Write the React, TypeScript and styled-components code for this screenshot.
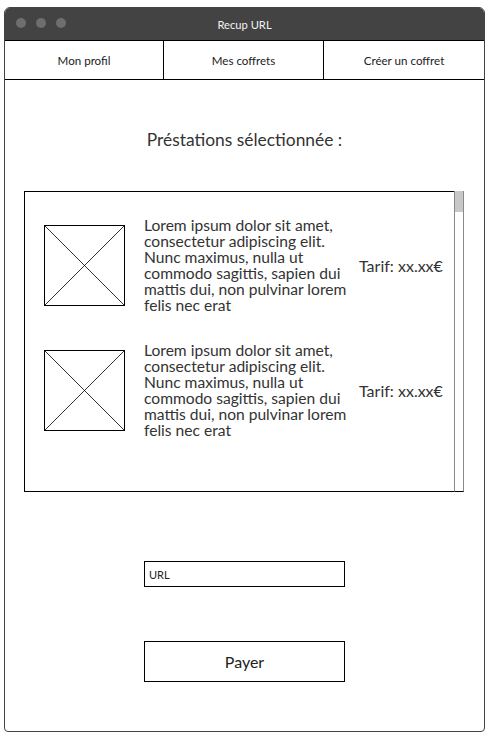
import styled, { createGlobalStyle } from 'styled-components';

const GlobalStyle = createGlobalStyle`
	body {
		margin: 0;
		background: #ffffff;
		font-family: Lato, 'Open Sans', sans-serif;
		color: #333333;
	}
`;

const Window = styled.div`
	box-sizing: border-box;
	margin: 7px 0 0 4px;
	width: 481px;
	height: 725px;
	border: 1px solid #444444;
	border-radius: 6px 6px 4px 4px;
	overflow: hidden;
	display: flex;
	flex-direction: column;
`;

const TitleBar = styled.div`
	position: relative;
	height: 32px;
	background: #434343;
	display: flex;
	align-items: center;
	justify-content: center;
	color: #f2f2f2;
	font-size: 11.2px;
`;

const Dots = styled.div`
	position: absolute;
	left: 11px;
	top: 10px;
	display: flex;
	gap: 10px;
`;

const Dot = styled.span`
	width: 10px;
	height: 10px;
	border-radius: 50%;
	background: #6e6e6e;
`;

const NavBar = styled.div`
	display: grid;
	grid-template-columns: 159px 160px 1fr;
	height: 40px;
	border-top: 1px solid #000;
	border-bottom: 1px solid #000;
	box-sizing: border-box;
`;

const NavItem = styled.div<{ $last?: boolean }>`
	display: flex;
	align-items: center;
	justify-content: center;
	font-size: 11.6px;
	color: #222222;
	border-right: ${(p) => (p.$last ? 'none' : '1px solid #000')};
`;

const Content = styled.div`
	flex: 1;
	display: flex;
	flex-direction: column;
	align-items: flex-start;
	padding: 0 0 0 19px;
`;

const Heading = styled.h1`
	align-self: stretch;
	margin: 48px 0 0 0;
	padding-right: 19px;
	font-size: 17.4px;
	font-weight: 400;
	text-align: center;
	color: #333333;
	line-height: 24px;
`;

const ListBox = styled.div`
	margin-top: 39px;
	display: flex;
	width: 440px;
	height: 301px;
	box-sizing: border-box;
`;

const ListArea = styled.div`
	flex: 1;
	border: 1px solid #000;
	border-right: none;
	padding: 25px 0 0 19px;
	display: flex;
	flex-direction: column;
	gap: 29px;
`;

const Scrollbar = styled.div`
	width: 10px;
	box-sizing: border-box;
	border-left: 1px solid #8a8a8a;
	border-right: 1px solid #8a8a8a;
	border-bottom: 1px solid #000;
	display: flex;
	flex-direction: column;
`;

const Thumb = styled.div`
	height: 21px;
	background: #c8c8c8;
`;

const Row = styled.div`
	display: grid;
	grid-template-columns: 81px 212px 1fr;
	column-gap: 19px;
	align-items: center;
`;

const Placeholder = styled.svg`
	display: block;
`;

const Description = styled.p`
	margin: 0;
	font-size: 15.6px;
	line-height: 16px;
	color: #333333;
`;

const Price = styled.span`
	font-size: 16px;
	color: #333333;
	margin-left: -16px;
`;

const UrlInput = styled.div`
	margin: 69px 0 0 120px;
	width: 201px;
	height: 26px;
	box-sizing: border-box;
	border: 1px solid #000;
	display: flex;
	align-items: center;
	padding-left: 4px;
	font-size: 11px;
	color: #222222;
`;

const PayButton = styled.div`
	margin: 54px 0 0 120px;
	width: 201px;
	height: 41px;
	box-sizing: border-box;
	border: 1px solid #000;
	display: flex;
	align-items: center;
	justify-content: center;
	font-size: 16px;
	color: #222222;
`;

const lorem =
	'Lorem ipsum dolor sit amet, consectetur adipiscing elit. Nunc maximus, nulla ut commodo sagittis, sapien dui mattis dui, non pulvinar lorem felis nec erat';

const ImageStub = () => (
	<Placeholder width="81" height="81" viewBox="0 0 81 81">
		<rect x="0.5" y="0.5" width="80" height="80" fill="#fff" stroke="#000" strokeWidth="1" />
		<line x1="0.5" y1="0.5" x2="80.5" y2="80.5" stroke="#000" strokeWidth="0.8" />
		<line x1="80.5" y1="0.5" x2="0.5" y2="80.5" stroke="#000" strokeWidth="0.8" />
	</Placeholder>
);

const items = [1, 2];

export default function App() {
	return (
		<>
			<GlobalStyle />
			<Window>
				<TitleBar>
					<Dots>
						<Dot />
						<Dot />
						<Dot />
					</Dots>
					Recup URL
				</TitleBar>
				<NavBar>
					<NavItem>Mon profil</NavItem>
					<NavItem>Mes coffrets</NavItem>
					<NavItem $last>Créer un coffret</NavItem>
				</NavBar>
				<Content>
					<Heading>Préstations sélectionnée :</Heading>
					<ListBox>
						<ListArea>
							{items.map((i) => (
								<Row key={i}>
									<ImageStub />
									<Description>{lorem}</Description>
									<Price>Tarif: xx.xx€</Price>
								</Row>
							))}
						</ListArea>
						<Scrollbar>
							<Thumb />
						</Scrollbar>
					</ListBox>
					<UrlInput>URL</UrlInput>
					<PayButton>Payer</PayButton>
				</Content>
			</Window>
		</>
	);
}
